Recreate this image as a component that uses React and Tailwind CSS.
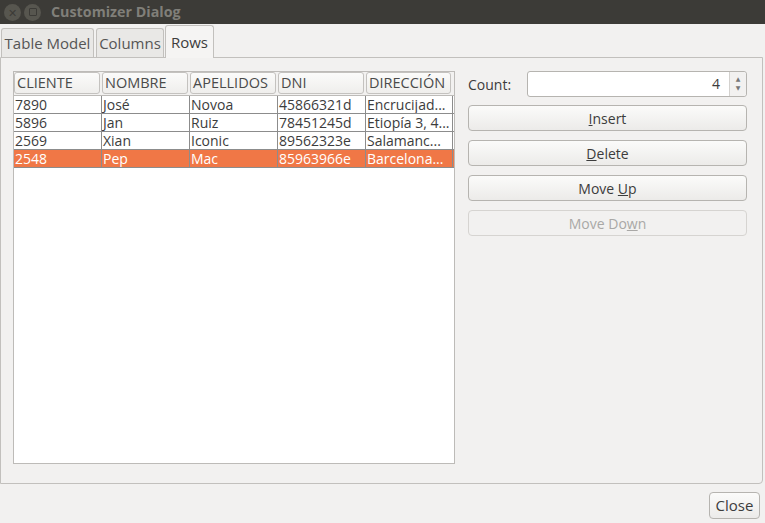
import React from 'react'

const columns = ['CLIENTE', 'NOMBRE', 'APELLIDOS', 'DNI', 'DIRECCIÓN']

const rows = [
  ['7890', 'José', 'Novoa', '45866321d', 'Encrucijad...'],
  ['5896', 'Jan', 'Ruiz', '78451245d', 'Etiopía 3, 4...'],
  ['2569', 'Xian', 'Iconic', '89562323e', 'Salamanc...'],
  ['2548', 'Pep', 'Mac', '85963966e', 'Barcelona...'],
]

const Btn = ({ children, disabled }) => (
  <div className={`h-[26px] rounded-[4px] border flex items-center justify-center text-[14px] ${disabled ? 'border-[#d6d4d1] bg-[#f2f1f0] text-[#a9a8a6]' : 'border-[#b6b4b0] bg-gradient-to-b from-[#fbfbfa] to-[#ecebe9] text-[#3c3c3c]'}`}>
    {children}
  </div>
)

export default function App() {
  return (
    <div className="w-[765px] h-[523px] bg-[#f2f1f0] flex flex-col text-[#3c3c3c]" style={{ fontFamily: '"Open Sans", "DejaVu Sans", sans-serif' }}>
      <div className="h-[24px] bg-[#3c3b37] flex items-center pl-[4px] shrink-0">
        <div className="w-[17px] h-[17px] rounded-full bg-[#57564f] flex items-center justify-center text-[#3c3b37] text-[11px] leading-none">✕</div>
        <div className="w-[17px] h-[17px] rounded-full bg-[#57564f] flex items-center justify-center ml-[3px]">
          <div className="w-[8px] h-[8px] border-[1.5px] border-[#3c3b37] rounded-[1px]" />
        </div>
        <span className="ml-[10px] text-[14.3px] font-bold text-[#807f79]">Customizer Dialog</span>
      </div>

      <div className="flex items-end h-[33px] pl-[1px] shrink-0">
        <div className="h-[29px] w-[93px] border border-b-0 border-[#c2c0bd] rounded-t-[3px] bg-[#e9e8e6] flex items-center justify-center text-[15px] text-[#555]">Table Model</div>
        <div className="h-[29px] w-[68px] ml-[2px] border border-b-0 border-[#c2c0bd] rounded-t-[3px] bg-[#e9e8e6] flex items-center justify-center text-[15px] text-[#555]">Columns</div>
        <div className="h-[33px] w-[49px] ml-[1px] border border-b-0 border-[#c2c0bd] rounded-t-[3px] bg-[#f5f4f3] flex items-center justify-center text-[15px] text-[#3c3c3c] relative z-10 -mb-[1px]">Rows</div>
      </div>

      <div className="h-[427px] w-[763px] border border-[#c2c0bd] rounded-br-[4px] flex px-[12px] pt-[13px] pb-[19px] shrink-0">
        <div className="w-[442px] h-full border border-[#bdbbb8] bg-white flex flex-col">
          <div className="flex bg-[#f2f1f0] h-[24px] items-center pb-[1px] border-b border-[#bdbbb8] gap-[2px]">
            {columns.map((c, i) => (
              <div key={c} className={`${i === 4 ? 'w-[85px]' : 'w-[86px]'} h-[22px] border border-[#c4c2bf] rounded-[3px] bg-gradient-to-b from-[#fbfbfa] to-[#efeeec] text-[14.5px] px-[2px] flex items-center text-[#4a4a4a]`}>
                {c}
              </div>
            ))}
          </div>
          {rows.map((r, ri) => (
            <div key={ri} className={`flex h-[18px] border-b border-[#8c8c8c] ${ri === 3 ? 'bg-[#f07746] text-white' : 'text-[#3c3c3c]'}`}>
              {r.map((cell, ci) => (
                <div key={ci} className={`${ci === 4 ? 'w-[87px]' : 'w-[88px]'} border-r border-[#8c8c8c] text-[14px] leading-[17px] pl-[1px] whitespace-nowrap overflow-hidden`}>
                  {cell}
                </div>
              ))}
            </div>
          ))}
        </div>

        <div className="flex-1 pl-[13px] pr-[3px] flex flex-col">
          <div className="flex items-center h-[26px]">
            <span className="text-[14px] w-[59px]">Count:</span>
            <div className="flex-1 h-[26px] border border-[#b6b4b0] rounded-[3px] bg-white flex">
              <div className="flex-1 text-right pr-[9px] text-[14px] leading-[24px]">4</div>
              <div className="w-[17px] border-l border-[#d3d1ce] bg-[#f2f1f0] rounded-r-[3px] flex flex-col items-center justify-center text-[6px] leading-[9px] text-[#777]">
                <span>▲</span>
                <span>▼</span>
              </div>
            </div>
          </div>
          <div className="flex flex-col gap-[9px] mt-[8px]">
            <Btn><span><span className="underline">I</span>nsert</span></Btn>
            <Btn><span><span className="underline">D</span>elete</span></Btn>
            <Btn><span>Move <span className="underline">U</span>p</span></Btn>
            <Btn disabled><span>Move Do<span className="underline">w</span>n</span></Btn>
          </div>
        </div>
      </div>

      <div className="flex justify-end pr-[5px] pt-[8px]">
        <div className="w-[51px] h-[27px] border border-[#b6b4b0] rounded-[4px] bg-gradient-to-b from-[#fbfbfa] to-[#ecebe9] flex items-center justify-center text-[15px]">Close</div>
      </div>
    </div>
  )
}
